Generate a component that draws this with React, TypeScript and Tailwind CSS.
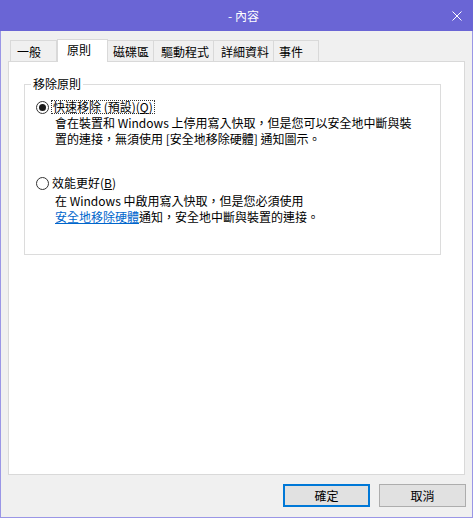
import React from "react";

const font = { fontFamily: '"Noto Sans CJK TC", "Noto Sans", sans-serif' };

function Tab({ label, w, pl, selected }: { label: string; w: number; pl: number; selected?: boolean }) {
  if (selected) {
    return (
      <div
        className="relative z-10 -mb-px h-[23px] bg-white border border-b-0 border-[#d9d9d9] flex items-start pt-[2px]"
        style={{ width: w, paddingLeft: pl }}
      >
        <span className="leading-[16px]">{label}</span>
      </div>
    );
  }
  return (
    <div
      className="h-[21px] -ml-px first:ml-0 bg-[#f0f0f0] border border-b-0 border-[#d9d9d9] flex items-start pt-[3px]"
      style={{ width: w, paddingLeft: pl }}
    >
      <span className="leading-[16px]">{label}</span>
    </div>
  );
}

function Radio({ checked }: { checked?: boolean }) {
  return (
    <div className="w-[13px] h-[13px] rounded-full border border-[#333] bg-white flex items-center justify-center shrink-0">
      {checked && <div className="w-[7px] h-[7px] rounded-full bg-[#1a1a1a]" />}
    </div>
  );
}

export default function App() {
  return (
    <div
      className="w-[473px] h-[518px] flex flex-col bg-[#f0f0f0] border-x border-b border-[#9a96e6] text-[12px] text-black"
      style={font}
    >
      <div className="h-[31px] -mx-px bg-[#6a65d5] flex items-center relative shrink-0">
        <div className="flex-1 flex justify-center pl-[14px] text-white leading-[16px]">- 內容</div>
        <svg className="absolute right-[11px] top-[11px]" width="10" height="10" viewBox="0 0 10 10">
          <path d="M0.5 0.5 L9.5 9.5 M9.5 0.5 L0.5 9.5" stroke="white" strokeWidth="1" />
        </svg>
      </div>

      <div className="flex flex-col px-[7px] pt-[8px]">
        <div className="flex items-end h-[22px] pl-[2px]">
          <Tab label="一般" w={47} pl={6} />
          <Tab label="原則" w={51} pl={9} selected />
          <Tab label="磁碟區" w={47} pl={5} />
          <Tab label="驅動程式" w={61} pl={7} />
          <Tab label="詳細資料" w={61} pl={7} />
          <Tab label="事件" w={46} pl={5} />
        </div>

        <div className="h-[414px] bg-white border border-[#d9d9d9] pl-[15px] pr-[23px] pt-[14px]">
          <fieldset className="border border-[#dcdcdc] h-[179px] pl-[6px] pr-[6px]">
            <legend className="px-[2px] leading-[16px]">移除原則</legend>
            <div className="pl-[5px] pt-[7px]">
              <div className="flex items-center h-[16px]">
                <Radio checked />
                <span className="ml-[2px] px-px border border-dotted border-[#333] leading-[12px] h-[14px]">
                  快速移除 (預設)(<span className="underline">Q</span>)
                </span>
              </div>
              <div className="pl-[19px] leading-[16px]">
                <div>會在裝置和 Windows 上停用寫入快取，但是您可以安全地中斷與裝</div>
                <div>置的連接，無須使用 [安全地移除硬體] 通知圖示。</div>
              </div>

              <div className="flex items-center h-[16px] mt-[28px]">
                <Radio />
                <span className="ml-[3px] leading-[16px]">
                  效能更好(<span className="underline">B</span>)
                </span>
              </div>
              <div className="pl-[19px] leading-[16px] mt-[2px]">
                <div>在 Windows 中啟用寫入快取，但是您必須使用</div>
                <div>
                  <span className="text-[#0066cc] underline">安全地移除硬體</span>通知，安全地中斷與裝置的連接。
                </div>
              </div>
            </div>
          </fieldset>
        </div>

        <div className="flex justify-end gap-[9px] mt-[9px]">
          <button className="w-[87px] h-[23px] bg-[#e1e1e1] border-2 border-[#0078d7] leading-[16px]" style={font}>
            確定
          </button>
          <button className="w-[87px] h-[23px] bg-[#e1e1e1] border border-[#adadad] leading-[16px] -mr-[1px]" style={font}>
            取消
          </button>
        </div>
      </div>
    </div>
  );
}
